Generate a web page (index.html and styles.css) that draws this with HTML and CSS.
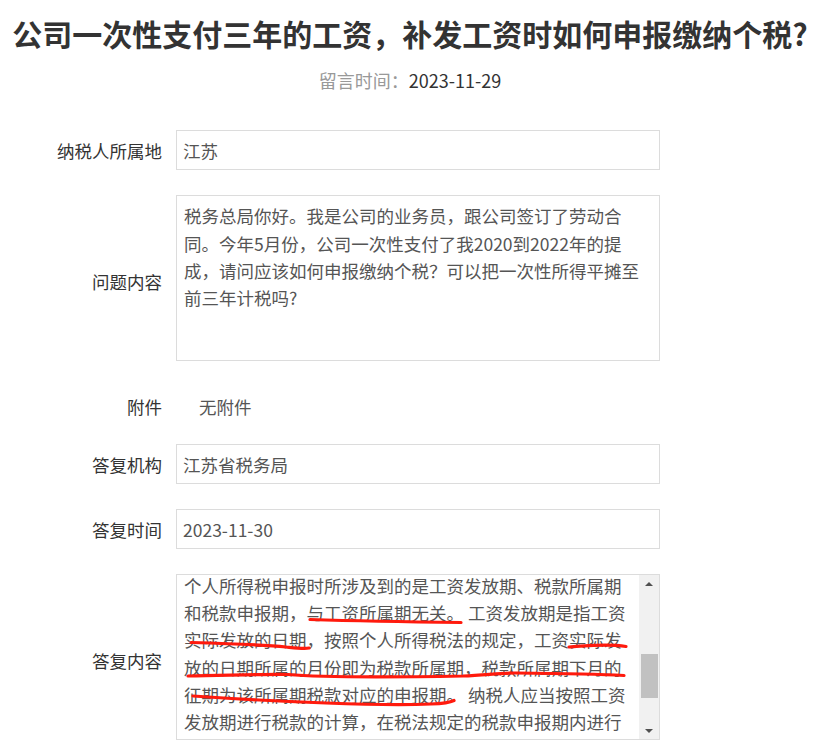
FILE: index.html
```html
<!DOCTYPE html>
<html lang="zh-CN">
<head>
<meta charset="utf-8">
<title>公司一次性支付三年的工资，补发工资时如何申报缴纳个税?</title>
<link rel="stylesheet" href="styles.css">
</head>
<body>
<div class="page">
  <h1 class="title">公司一次性支付三年的工资，补发工资时如何申报缴纳个税?</h1>
  <p class="meta"><span class="meta-label">留言时间：</span><span class="meta-date">2023-11-29</span></p>

  <div class="form">
    <div class="row">
      <div class="label">纳税人所属地</div>
      <div class="field input">江苏</div>
    </div>

    <div class="row">
      <div class="label label-tall">问题内容</div>
      <div class="field area question">税务总局你好。我是公司的业务员，跟公司签订了劳动合<br>同。今年5月份，公司一次性支付了我2020到2022年的提<br>成，请问应该如何申报缴纳个税？可以把一次性所得平摊至<br>前三年计税吗?</div>
    </div>

    <div class="row row-plain">
      <div class="label">附件</div>
      <div class="plain">无附件</div>
    </div>

    <div class="row">
      <div class="label">答复机构</div>
      <div class="field input">江苏省税务局</div>
    </div>

    <div class="row">
      <div class="label">答复时间</div>
      <div class="field input">2023-11-30</div>
    </div>

    <div class="row">
      <div class="label label-tall">答复内容</div>
      <div class="field area answer">
        <div class="answer-view">
          <div class="answer-text">个人所得税申报时所涉及到的是工资发放期、税款所属期<br>和税款申报期，与工资所属期无关。 工资发放期是指工资<br>实际发放的日期，按照个人所得税法的规定，工资实际发<br>放的日期所属的月份即为税款所属期，税款所属期下月的<br>征期为该所属期税款对应的申报期。 纳税人应当按照工资<br>发放期进行税款的计算，在税法规定的税款申报期内进行<br>税款的申报。</div>
        </div>
        <div class="scrollbar">
          <div class="sb-btn"><span class="arrow-up"></span></div>
          <div class="sb-track"><div class="sb-thumb"></div></div>
          <div class="sb-btn"><span class="arrow-down"></span></div>
        </div>
        <svg class="marks" width="484" height="167" viewBox="0 0 484 167" aria-hidden="true">
          <path d="M134 45.5 C 180 47, 240 48, 285 48.5"/>
          <path d="M15 68.5 C 50 69.5, 90 71, 110 73 C 120 74, 128 75, 133 74"/>
          <path d="M393 73 C 410 72, 430 69, 450 72.5"/>
          <path d="M12 102 C 50 101.5, 90 100, 112 100.5 C 140 103, 200 103.5, 287 102 C 310 101, 325 99, 340 99 C 390 99.5, 430 100.5, 448 101.5"/>
          <path d="M17 122 C 60 125, 110 127.5, 150 129 C 190 130.5, 230 131, 255 130 C 268 129.5, 275 128, 278 126.5"/>
        </svg>
      </div>
    </div>
  </div>
</div>
</body>
</html>
```

FILE: styles.css
```css
html, body {
  margin: 0;
  padding: 0;
  background: #fff;
}

body {
  font-family: "Noto Sans CJK SC", "Noto Sans", "Liberation Sans", sans-serif;
  font-size: 17.5px;
  line-height: 27.3px;
  color: #333;
}

.page {
  width: 820px;
}

.title {
  margin: 13px 0 0;
  font-size: 30px;
  line-height: 40px;
  font-weight: bold;
  color: #333;
  text-align: center;
}

.meta {
  margin: 14px 0 0;
  text-align: center;
  font-size: 18px;
  line-height: 27.3px;
}

.meta-label {
  color: #999;
}

.meta-date {
  color: #333;
}

.form {
  margin-top: 36px;
  display: flex;
  flex-direction: column;
  gap: 25px;
}

.row {
  display: flex;
  align-items: center;
  gap: 14px;
}

.label {
  width: 162px;
  flex: none;
  text-align: right;
  color: #333;
}

.label-tall {
  padding-top: 7px;
}

.field {
  width: 484px;
  box-sizing: border-box;
  border: 1px solid #dcdcdc;
  color: #555;
  background: #fff;
}

.input {
  height: 40px;
  padding: 0 6px;
  display: flex;
  align-items: center;
}

.area {
  height: 166px;
  white-space: nowrap;
  overflow: hidden;
}

.question {
  padding: 6px 7px;
}

.row-plain {
  height: 33px;
  box-sizing: border-box;
  padding-top: 7px;
  align-items: flex-start;
}

.plain {
  padding-left: 23px;
  color: #555;
}

.answer {
  height: 166px;
  position: relative;
  display: flex;
}

.answer-view {
  flex: 1;
  overflow: hidden;
  padding-left: 7px;
}

.answer-text {
  margin-top: -3.5px;
}

.scrollbar {
  width: 20px;
  flex: none;
  background: #f1f1f1;
  display: flex;
  flex-direction: column;
}

.sb-btn {
  height: 17px;
  flex: none;
  display: flex;
  align-items: center;
  justify-content: center;
}

.arrow-up {
  width: 0;
  height: 0;
  border-left: 4px solid transparent;
  border-right: 4px solid transparent;
  border-bottom: 4px solid #505050;
}

.arrow-down {
  width: 0;
  height: 0;
  border-left: 4px solid transparent;
  border-right: 4px solid transparent;
  border-top: 4px solid #505050;
}

.sb-track {
  flex: 1;
  padding-top: 62px;
}

.sb-thumb {
  height: 44px;
  margin: 0 1px 0 2px;
  background: #c1c1c1;
}

.marks {
  position: absolute;
  left: -1px;
  top: -1px;
  pointer-events: none;
}

.marks path {
  fill: none;
  stroke: #ff1a0d;
  stroke-width: 3.2;
  stroke-linecap: round;
  stroke-linejoin: round;
}
```
